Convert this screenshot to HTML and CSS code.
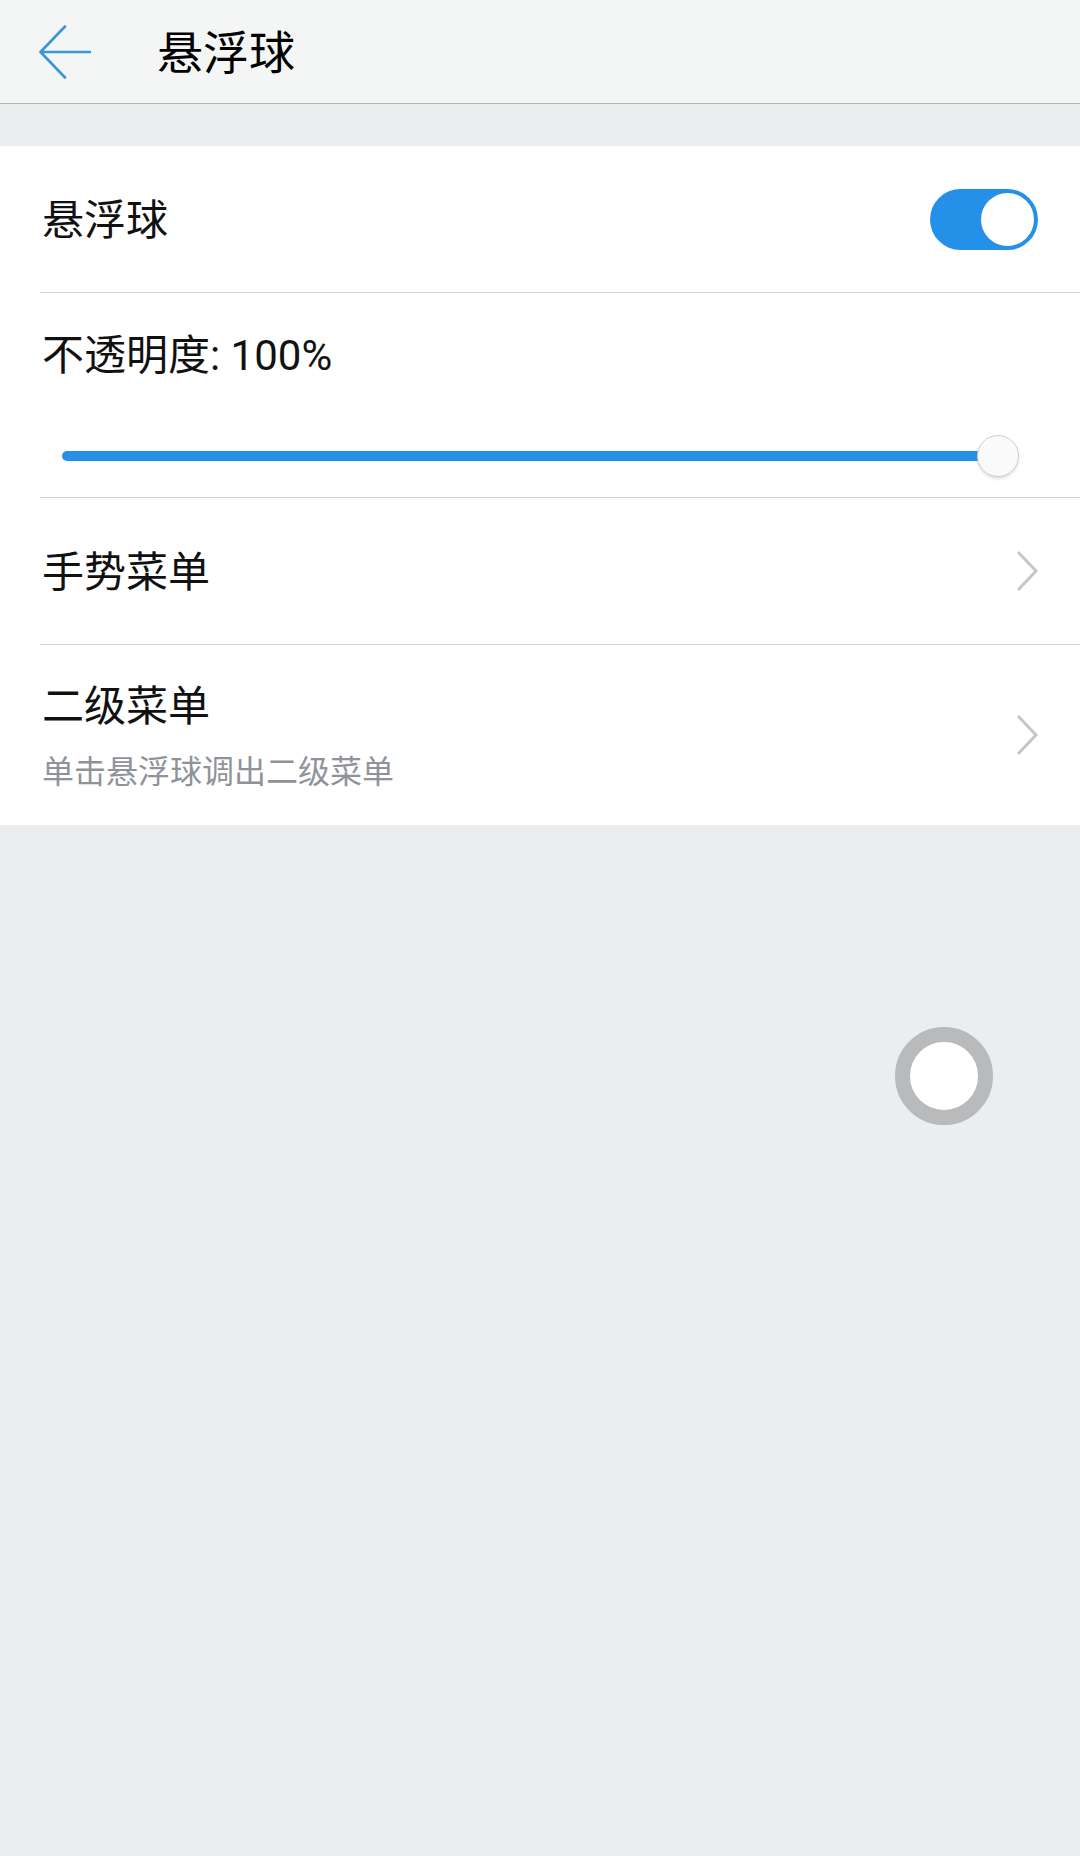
FILE: index.html
```
<!DOCTYPE html>
<html>
	<head>
		<meta http-equiv="Content-Type" content="text/html; charset=utf-8" />
		<title>悬浮球</title>
		<link rel="stylesheet" href="styles.css">
	</head>
	<body>
		<div class="header">
			<svg class="back" width="52" height="54" viewBox="0 0 52 54">
				<path d="M26 1.5 L1.5 27 L26 52.5 M1.5 27 H51" fill="none" stroke="#3a97d4" stroke-width="2.6" stroke-linecap="round" stroke-linejoin="round"/>
			</svg>
			<h1>悬浮球</h1>
		</div>
		<div class="band"></div>
		<div class="list">
			<div class="row row-switch">
				<span class="label">悬浮球</span>
				<div class="toggle"><div class="knob"></div></div>
			</div>
			<div class="row row-slider">
				<div class="slider-title"><span class="label">不透明度: 100%</span></div>
				<div class="slider">
					<div class="track" style="width:100%"></div>
					<div class="thumb"></div>
				</div>
			</div>
			<div class="row row-link">
				<span class="label">手势菜单</span>
				<svg class="chev" width="24" height="42" viewBox="0 0 24 42"><path d="M3 2 L21 21 L3 40" fill="none" stroke="#c6c6c6" stroke-width="3"/></svg>
			</div>
			<div class="row row-link row-last">
				<div class="texts">
					<span class="label">二级菜单</span>
					<span class="sub">单击悬浮球调出二级菜单</span>
				</div>
				<svg class="chev" width="24" height="42" viewBox="0 0 24 42"><path d="M3 2 L21 21 L3 40" fill="none" stroke="#c6c6c6" stroke-width="3"/></svg>
			</div>
		</div>
		<div class="ball"></div>
	</body>
</html>
```
FILE: styles.css
```
html, body {margin:0;padding:0;}
body {font-family:Roboto, "Noto Sans CJK SC", sans-serif;background:#ecedef;width:1080px;height:1856px;position:relative;overflow:hidden;}
.header {height:103px;background:#f4f5f5;border-bottom:1px solid #b4b4b4;display:flex;align-items:center;}
.header .back {margin-left:39px;}
.header h1 {margin:2px 0 0 66px;font-size:46px;font-weight:normal;color:#000;line-height:1;}
.band {height:42px;}
.list {background:#fff;}
.row {margin-left:40px;border-bottom:1px solid #d2d2d2;display:flex;align-items:center;justify-content:space-between;padding-right:42px;}
.row-last {border-bottom:none;}
.label {font-size:42px;color:#111;line-height:52px;padding-left:2px;padding-top:3px;}
.row-switch {height:146px;}
.toggle {width:108px;height:61px;border-radius:31px;background:#2590e8;position:relative;}
.toggle .knob {position:absolute;right:4px;top:4px;width:53px;height:53px;border-radius:50%;background:#fff;}
.row-slider {height:204px;flex-direction:column;align-items:stretch;padding-right:0;}
.slider-title {height:122px;display:flex;align-items:center;}
.slider {height:82px;position:relative;margin-left:22px;margin-right:82px;}
.track {position:absolute;left:0;top:36px;height:10px;border-radius:5px;background:#2590e8;}
.thumb {position:absolute;right:-21px;top:20px;width:40px;height:40px;border-radius:50%;background:#fafafa;border:1px solid #cfcfcf;box-shadow:0 2px 3px rgba(0,0,0,0.12);}
.row-link {height:146px;padding-right:41px;}
.row-last {height:180px;align-items:flex-start;}
.row-last .chev {margin-top:69px;}
.texts {display:flex;flex-direction:column;padding-top:33px;}
.sub {font-size:32px;color:#8f9399;line-height:44px;margin-top:17px;padding-left:2px;}
.ball {position:absolute;left:895px;top:1027px;width:68px;height:68px;border-radius:50%;background:#fff;border:15px solid #b9babc;}
```
